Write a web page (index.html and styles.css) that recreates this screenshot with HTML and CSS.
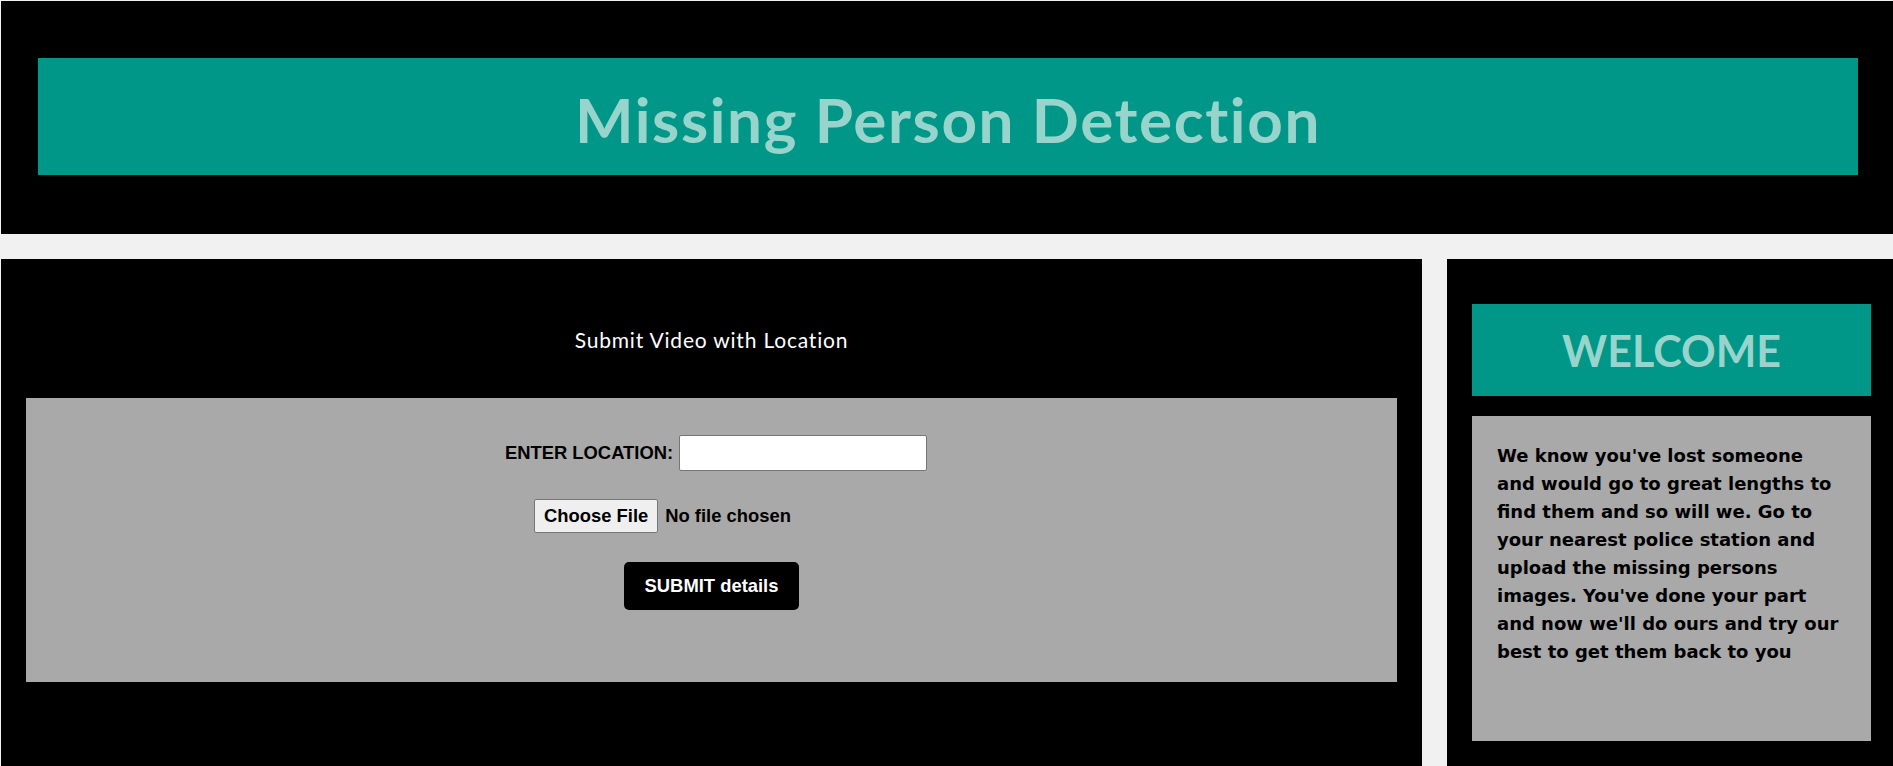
FILE: index.html
```html
<!DOCTYPE html>
<html lang="en">
<head>
<meta charset="utf-8">
<title>Missing Person Detection</title>
<link rel="stylesheet" href="styles.css">
</head>
<body>
<header class="site-header">
  <div class="banner">
    <h1 class="banner-title">Missing Person Detection</h1>
  </div>
</header>
<main class="content">
  <section class="upload-panel">
    <h2 class="upload-title">Submit Video with Location</h2>
    <form class="upload-form">
      <div class="form-row location-row">
        <label class="field-label" for="loc">ENTER LOCATION:</label>
        <input id="loc" class="text-input" type="text">
      </div>
      <div class="form-row file-row">
        <input class="file-input" type="file">
      </div>
      <div class="form-row submit-row">
        <button class="submit-btn" type="button">SUBMIT details</button>
      </div>
    </form>
  </section>
  <aside class="welcome-panel">
    <div class="welcome-banner">
      <h2 class="welcome-title">WELCOME</h2>
    </div>
    <div class="welcome-body">
      <p class="welcome-text">We know you've lost someone and would go to great lengths to find them and so will we. Go to your nearest police station and upload the missing persons images. You've done your part and now we'll do ours and try our best to get them back to you</p>
    </div>
  </aside>
</main>
</body>
</html>
```
FILE: styles.css
```css
* {
  box-sizing: border-box;
}

html, body {
  margin: 0;
}

body {
  padding: 1px 0 0 1px;
  background: #f1f1f1;
  font-family: "Liberation Sans", Arial, sans-serif;
  overflow: hidden;
}

.site-header {
  background: #000;
  height: 233px;
  padding: 57px 35px 0 37px;
}

.banner {
  background: #009688;
  height: 117px;
  padding-top: 24px;
  text-align: center;
}

.banner-title {
  margin: 0;
  font-family: Lato, "Open Sans", sans-serif;
  font-weight: 700;
  font-size: 62px;
  line-height: 74px;
  letter-spacing: 1.6px;
  color: #97d4cb;
}

.content {
  display: flex;
  gap: 25px;
  margin-top: 25px;
}

.upload-panel {
  flex: 0 0 1421px;
  height: 540px;
  background: #000;
  padding: 68px 25px 0;
}

.upload-title {
  margin: 0;
  font-family: Lato, "Open Sans", sans-serif;
  font-weight: 400;
  font-size: 21px;
  line-height: 25px;
  letter-spacing: 0.8px;
  color: #fff;
  text-align: center;
}

.upload-form {
  margin-top: 46px;
  background: #a9a9a9;
  height: 284px;
  padding-top: 37px;
  display: flex;
  flex-direction: column;
  align-items: center;
  font-size: 18.4px;
  font-weight: 700;
  color: #000;
}

.form-row {
  display: flex;
  align-items: center;
  justify-content: center;
}

.location-row {
  height: 36px;
  gap: 6px;
  margin-left: 9px;
}

.field-label {
  font-size: 18.4px;
  font-weight: 700;
}

.text-input {
  width: 248px;
  height: 36px;
  border: 1px solid #767676;
  border-radius: 2px;
  background: #fff;
  padding: 0 4px;
  font: inherit;
}

.file-row {
  margin-top: 28px;
}

.file-input {
  width: 355px;
  height: 34px;
  font-family: "Liberation Sans", Arial, sans-serif;
  font-size: 18.4px;
  font-weight: 700;
  color: #000;
}

.file-input::file-selector-button {
  height: 34px;
  padding: 0 9px;
  margin-right: 7px;
  border: 1px solid #767676;
  border-radius: 2px;
  background: #efefef;
  color: #000;
  font-family: "Liberation Sans", Arial, sans-serif;
  font-size: 18.4px;
  font-weight: 700;
}

.submit-row {
  margin-top: 29px;
}

.submit-btn {
  height: 48px;
  padding: 0 21px;
  border: none;
  border-radius: 5px;
  background: #000;
  color: #fff;
  font-family: "Liberation Sans", Arial, sans-serif;
  font-size: 18.4px;
  font-weight: 700;
}

.welcome-panel {
  flex: 1 1 auto;
  height: 540px;
  background: #000;
  padding: 45px 22px 0 25px;
}

.welcome-banner {
  background: #009688;
  height: 92px;
  padding-top: 21px;
  text-align: center;
}

.welcome-title {
  margin: 0;
  font-family: Lato, "Open Sans", sans-serif;
  font-weight: 700;
  font-size: 43px;
  line-height: 52px;
  color: #97d4cb;
}

.welcome-body {
  margin-top: 20px;
  background: #a9a9a9;
  height: 325px;
  padding: 26px 29px 0 25px;
}

.welcome-text {
  margin: 0;
  font-family: "DejaVu Sans", Verdana, sans-serif;
  font-weight: 700;
  font-size: 18px;
  line-height: 28px;
  color: #000;
}
```
